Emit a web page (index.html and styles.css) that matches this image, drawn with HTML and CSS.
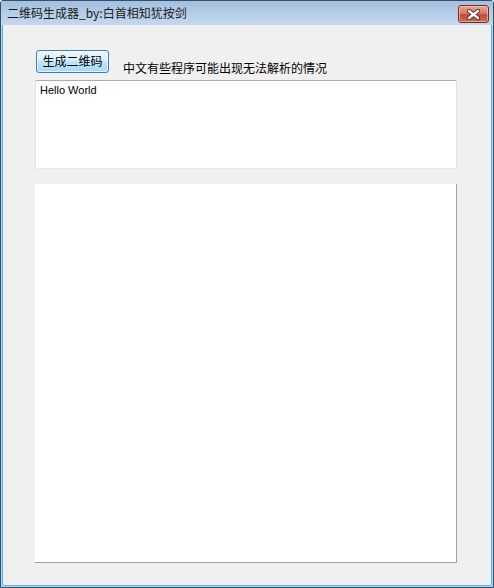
FILE: index.html
```html
<!DOCTYPE html>
<html>
  <head>
    <meta charset="UTF-8" />
    <title>二维码生成器</title>
    <link rel="stylesheet" href="styles.css">
  </head>
  <body>
    <div class="window">
      <div class="titlebar">
        <span class="title">二维码生成器_by:白首相知犹按剑</span>
        <button class="close" title="关闭">
          <svg width="15" height="11" viewBox="0 0 15 11">
            <path d="M3 2 L12 9 M12 2 L3 9" stroke="#5a2a24" stroke-width="4.2" stroke-linecap="round" fill="none" />
            <path d="M3 2 L12 9 M12 2 L3 9" stroke="#ffffff" stroke-width="2.4" stroke-linecap="round" fill="none" />
          </svg>
        </button>
      </div>
      <div class="client">
        <div class="toolbar">
          <button class="generate">生成二维码</button>
          <span class="hint">中文有些程序可能出现无法解析的情况</span>
        </div>
        <div class="input">Hello World</div>
        <div class="picture"></div>
      </div>
    </div>
  </body>
</html>
```

FILE: styles.css
```css
* {
  box-sizing: border-box;
  font-family: "Noto Sans CJK SC", sans-serif;
}

body {
  margin: 0;
}

.window {
  width: 494px;
  height: 588px;
  border: 1px solid #2b5176;
  border-radius: 3px 3px 0 0;
  background: #bcd2ea;
  display: flex;
  flex-direction: column;
}

.titlebar {
  height: 24px;
  display: flex;
  align-items: center;
  justify-content: space-between;
  padding: 0 4px 0 6px;
  background: linear-gradient(#a5bfdc, #b8cfe9 60%, #c4d8ef);
}

.title {
  font-size: 12px;
  line-height: 14px;
  color: #1a1a1a;
}

.close {
  width: 31px;
  height: 18px;
  margin-top: 2px;
  padding: 0;
  border: 1px solid #6e2c24;
  border-radius: 3px;
  background: linear-gradient(#e6a597, #d77a68 45%, #c34b37 55%, #cf6a52);
  box-shadow: inset 0 0 0 1px rgba(255, 220, 210, 0.55);
  display: flex;
  align-items: center;
  justify-content: center;
}

.client {
  flex: 1;
  margin: 0 2px 2px 2px;
  background: #f0f0f0;
  box-shadow: -1px 0 0 #4fb8e3, 1px 0 0 #4fb8e3, 0 1px 0 #4fb8e3;
  padding: 25px 0 0 32px;
}

.toolbar {
  display: flex;
  align-items: flex-start;
  height: 25px;
}

.generate {
  width: 73px;
  height: 23px;
  margin-left: 1px;
  padding: 0 0 1px 0;
  border: 1px solid #3c7fb1;
  border-radius: 3px;
  background: linear-gradient(#eaf6fd, #d9f0fc 50%, #bee6fd 50%, #a7d9f5);
  box-shadow: inset 0 0 0 1px rgba(255, 255, 255, 0.7);
  font-size: 12px;
  line-height: 14px;
  color: #000;
}

.hint {
  margin: 11px 0 0 14px;
  font-size: 12px;
  line-height: 14px;
  color: #000;
}

.input {
  width: 422px;
  height: 89px;
  margin-top: 5px;
  background: #fff;
  border: 1px solid #e2e3ea;
  border-top-color: #abadb3;
  border-bottom-color: #e3e9ef;
  padding: 3px 4px;
  font-family: "Liberation Sans", sans-serif;
  font-size: 11px;
  line-height: 13px;
  color: #000;
}

.picture {
  width: 422px;
  height: 379px;
  margin-top: 15px;
  background: #fff;
  border-right: 1px solid #a0a0a0;
  border-bottom: 1px solid #a0a0a0;
}
```
